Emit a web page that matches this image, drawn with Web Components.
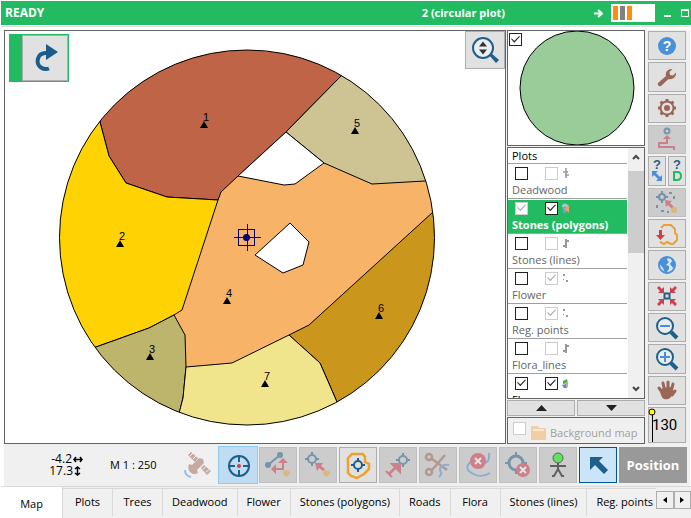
<!DOCTYPE html>
<html lang="en">
<head>
<meta charset="utf-8">
<title>Field map</title>
<style>
html, body { height: 100%; margin: 0; }
body {
  --green: #23bb61; --face: #f0f0f0; --line: #646464;
  background: #fff; color: #000; font: 11px/16px "Open Sans", "Noto Sans", sans-serif; overflow: hidden;
}
</style>
</head>
<body>
<field-app></field-app>
<script>
const define = (name, css, html) => {
  customElements.define(name, class extends HTMLElement {
    constructor() {
      super();
      this.attachShadow({ mode: 'open' });
    }
    connectedCallback() {
      const body = typeof html === 'function' ? html(this) : html;
      this.shadowRoot.innerHTML = `<style>*{box-sizing:border-box}:host{box-sizing:border-box}${css}</style>${body}`;
    }
  });
};

const spokes = (n, draw) => Array.from({ length: n }, (_, i) => `<g transform="rotate(${i * 360 / n} 12 12)">${draw}</g>`).join('');
const cross = (x, y, r) => `<g fill="none" stroke="#1f5f8b" stroke-width="2"><circle cx="${x}" cy="${y}" r="${r}"/><path d="M${x} ${y - r - 3}v4M${x} ${y + r - 1}v4M${x - r - 3} ${y}h4M${x + r - 1} ${y}h4"/></g>`;
const lens = '<circle cx="10" cy="10" r="8" fill="#e9edf0" stroke="#1f5f8b" stroke-width="2"/><path d="M16 16l6 6" stroke="#1f5f8b" stroke-width="4"/>';

const ICONS = {
  redo: [24, '<path d="M16 22.500q-4 1.500-8-1a8 8 0 0 1 4-14.500h3" fill="none" stroke="#1b5c8c" stroke-width="4"/><path d="M13 -2l12 8-12 8z" fill="#1b5c8c"/>'],
  fit: [28, '<circle cx="12" cy="12" r="10" fill="#e9eef2" stroke="#1f5f8b" stroke-width="2"/><path d="M18 19l2-2 8 7-3 3z" fill="#1f5f8b"/><path d="M12 5.500l4 5H8zM12 18.500l4-5H8z" fill="#333"/>'],
  help: [24, '<circle cx="12" cy="12" r="9" fill="#4a90d9"/><text x="12" y="17" text-anchor="middle" font-family="Liberation Sans" font-weight="700" font-size="14" fill="#fff">?</text>'],
  wrench: [24, '<path d="M3 18l8-7c-1-4 2-7.500 6.500-7L14.500 7l.5 3 3 .5 3-3c.5 4-3 7.500-7.500 6.500L6 21c-2 1-4-1-3-3z" fill="#9a6655"/>'],
  gear: [24, spokes(8, '<path d="M10.500 3h3v4h-3z" fill="#9a6655"/>') + '<circle cx="12" cy="12" r="6.500" fill="#e1e1e1" stroke="#9a6655" stroke-width="2"/><circle cx="12" cy="12" r="3" fill="#9a6655"/>'],
  elevate: [24, '<circle cx="12" cy="3" r="2.500" fill="none" stroke="#1f5f8b" stroke-width="2"/><path d="M12 10v5H4v4h15v3" fill="none" stroke="#d0364a" stroke-width="2"/><path d="M12 7l4 4H8z" fill="#d0364a"/>'],
  qmove: [16, '<text x="8" y="6" text-anchor="middle" font-family="Liberation Sans" font-weight="700" font-size="13" fill="#1f5f8b">?</text><path d="M3 8h6L7 10l4 4 2-2v6H7l2-2-4-4-2 2z" fill="#4a90d9"/>'],
  qd: [16, '<text x="8" y="6" text-anchor="middle" font-family="Liberation Sans" font-weight="700" font-size="13" fill="#1f5f8b">?</text><path d="M5 9h3q4 0 4 4t-4 4H5z" fill="none" stroke="#23bb61" stroke-width="2"/>'],
  scatter: [24, cross(7, 7, 3) + '<path d="M10 10l7 1-2 2 4 4-2 2-4-4-2 2z" fill="#d0364a"/><circle cx="19" cy="20" r="3" fill="#eda12f"/><g fill="#1f5f8b"><path d="M14 2h3v2h-3zM18 6h2v3h-2zM1 15h2v3H1zM6 20h3v2H6zM12 21h2v2h-2z"/></g>'],
  outline: [24, '<path d="M6 6l3-3h7l4 4v4l2 2v5l-4 4h-2l-4-2-3 2-4-2" fill="none" stroke="#eda12f" stroke-width="2"/><path d="M4 8h3v5h3l-4.500 5L1 13h3z" fill="#cc3f4d"/>'],
  globe: [24, '<circle cx="12" cy="12" r="8" fill="#d8e6f3" stroke="#4a90d9" stroke-width="2"/><path d="M4 10c2-5 6-7 9-6l-1 3 2 2-3 3 3 1v3l-3 4c-2 0-2-3-3-5zM16 5c3 1 4 4 4 7l-2 3-3-4 2-3z" fill="#4a90d9"/>'],
  center: [24, '<path d="M9.500 9.500h5v5h-5z" fill="none" stroke="#1f5f8b" stroke-width="2"/>' + spokes(4, '<path d="M2 4l2-2 3 3 2-2v6H3l2-2z" fill="#cc3f4d"/>')],
  minus: [24, lens + '<path d="M5 10h10" stroke="#4a90d9" stroke-width="2"/>'],
  plus: [24, lens + '<path d="M5 10h10M10 5v10" stroke="#4a90d9" stroke-width="2"/>'],
  hand: [24, '<path d="M4 10l3 4M8 5l2 9M13 4v9M18 6l-2 8M20 13l-3 4" fill="none" stroke="#9a6655" stroke-width="3" stroke-linecap="round"/><path d="M5 12l3-2 9-1 2 6-4 5q-2 2-6 1-3-1-4-9z" fill="#9a6655"/>'],
  satellite: [28, '<g fill="#9a6655"><path d="M5 4l3-3 7 6-3 4zM18 17l3-3 7 6-4 4z"/><path d="M8 15l8-8 4 1 1 4-7 7zM6 13c5 1 8 5 9 9-3 2-6 1-8-1s-2-5-1-8z"/></g><path d="M2 19q0 6 6 7" fill="none" stroke="#4a90d9" stroke-width="2"/><path d="M7 5l3-3M10 8l3-3M20 18l4-3M23 21l4-3" stroke="#f0f0f0"/>'],
  target: [28, '<circle cx="15" cy="15" r="10" fill="none" stroke="#1f5f8b" stroke-width="2"/><path d="M15 4v7M15 19v7M4 15h7M19 15h7" stroke="#1f5f8b" stroke-width="2"/><circle cx="15" cy="15" r="2" fill="#cc3f4d"/>'],
  segment: [28, '<path d="M4 14L16 4" stroke="#1f5f8b" stroke-width="2"/><g fill="#1f5f8b"><circle cx="4" cy="14" r="3"/><circle cx="16" cy="4" r="3"/></g><path d="M11 18h8v-6" fill="none" stroke="#d0364a" stroke-width="2"/><path d="M12 13v10l-5-5zM14 12h10l-5-5z" fill="#d0364a"/><path d="M20 19l5 1 1 3-4 3-3-3z" fill="#eda12f"/>'],
  pointarrow: [28, cross(8, 8, 4) + '<path d="M11 12h8l-2 3 4 3-2 2-4-3-2 3z" fill="#d0364a"/><path d="M20 19l5 1 1 3-4 3-3-3z" fill="#eda12f"/>'],
  polypoint: [28, '<path d="M8 3h11l2 3v5l4 2v5l-5 5-7 4-6-2-3-3V7z" fill="none" stroke="#eda12f" stroke-width="2.500"/>' + cross(14, 14, 4)],
  vector: [28, cross(19, 9, 4) + '<path d="M5 23l8-8" stroke="#d0364a" stroke-width="2.500"/><path d="M8 13h8v8zM2 20l6 6" fill="#d0364a" stroke="#d0364a" stroke-width="2"/>'],
  scissors: [28, '<g fill="none" stroke="#9a6655" stroke-width="2.500"><circle cx="5" cy="6" r="3"/><circle cx="5" cy="21" r="3"/><path d="M8 8l15 11M8 19L21 4"/></g><path d="M25 14c-7-1-11 3-8 7 1 2-1 4-2 5" fill="none" stroke="#4a90d9" stroke-width="2"/>'],
  delline: [28, '<path d="M25 2c1 12-5 10-11 8C5 8 0 17 6 21s12 6 20 1" fill="none" stroke="#4a90d9" stroke-width="2"/><circle cx="14" cy="10" r="8" fill="#d0364a"/><path d="M11 7l6 6M17 7l-6 6" stroke="#fff" stroke-width="2"/>'],
  delpoint: [28, '<circle cx="12" cy="12" r="7" fill="none" stroke="#1f5f8b" stroke-width="3"/><path d="M12 1v5M1 12h5M12 18v5M18 12h5" stroke="#1f5f8b" stroke-width="2"/><circle cx="19" cy="19" r="7" fill="#d0364a"/><path d="M16 16l6 6M22 16l-6 6" stroke="#fff" stroke-width="2"/>'],
  person: [28, '<path d="M14 11v8M6 15h16M14 18l-4 7H8M14 18l4 7h2" fill="none" stroke="#606060" stroke-width="2"/><circle cx="14" cy="7" r="5" fill="#5fe35a" stroke="#606060"/>'],
  pointer: [28, '<path d="M6 6h13l-4 4 9 9-4 4-9-9-5 5z" fill="#1f5f8b"/>'],
};

define('ui-icon', ':host{display:inline-flex;flex:none}svg{display:block;overflow:visible}', el => {
  const [size, art] = ICONS[el.getAttribute('name')];
  return `<svg width="${size}" height="${size}" viewBox="0 0 ${size} ${size}" aria-hidden="true">${art}</svg>`;
});

define('tool-button', `
  :host{display:flex;min-width:0}
  button{flex:1;min-width:0;margin:0;padding:0;display:flex;align-items:center;justify-content:center;overflow:hidden;
    background:#e1e1e1;border:1px solid #adadad;font:inherit}
  button:disabled{background:#ccc;border-color:#bfbfbf}
  button:disabled ui-icon{opacity:.5}
  :host([kind=hot]) button{background:#bfdcf3;border-color:#90c8f6}
  :host([kind=on]) button{background:#cce4f7;border-color:#00549a}
  :host([kind=flat]) button{background:none;border-color:transparent}
  :host([kind=lit]) ui-icon{opacity:1 !important}`,
  el => `<button type="button" aria-label="${el.getAttribute('label')}" ${el.hasAttribute('off') ? 'disabled' : ''}><ui-icon name="${el.getAttribute('icon')}"></ui-icon></button>`);

define('tick-box', `
  :host{display:inline-flex;flex:none}
  input{appearance:none;width:13px;height:13px;margin:0;border:1px solid #222;background:#fff;display:grid;place-items:center}
  input:checked::before{content:"";width:9px;height:8px;background:#222;clip-path:polygon(0 45%,10% 38%,36% 68%,90% 5%,100% 12%,37% 90%)}
  input:disabled{border-color:#ccc}
  input:disabled::before{background:#aaa}`,
  el => `<input type="checkbox" aria-label="${el.getAttribute('label')}" ${el.hasAttribute('checked') ? 'checked' : ''} ${el.hasAttribute('off') ? 'disabled' : ''}>`);

define('title-bar', `
  :host{display:flex;flex:none;align-items:center;height:24px;margin:1px 0 0 1px;padding-left:4px;background:var(--green);color:#fff;font-weight:700}
  .state{margin-right:auto;font-size:12px}
  .arrow{margin:0 8px 0 89px}
  .meter{width:44px;height:18px;background:#fff;display:flex;gap:2px;padding:2px}
  i{width:5px;background:#ff8c0a}i+i{background:#808080}i+i+i{background:#ff8c0a}
  button{padding:0;border:0;background:none;display:flex}
  .min{margin:0 9px}
  svg{display:block}`, `
  <span class="state">READY</span><span>2 (circular plot)</span>
  <svg class="arrow" width="9" height="9" viewBox="0 0 9 9"><path d="M0 4.500h7M4 1l4 3.500L4 8" fill="none" stroke="#fff" stroke-width="2"/></svg>
  <div class="meter"><i></i><i></i><i></i></div>
  <button class="min" aria-label="Minimise"><svg width="8" height="8"><path d="M0 7h7" stroke="#fff" stroke-width="2"/></svg></button>
  <button aria-label="Maximise"><svg width="10" height="8"><path d="M.5 1v6.500h7V1" fill="none" stroke="#fff"/><path d="M0 1h8" stroke="#fff" stroke-width="2"/></svg></button>`);

const SITES = [[1, 204, 125], [2, 120, 244], [3, 150, 357], [4, 227, 301], [5, 355, 131], [6, 379, 316], [7, 265, 384]];
define('plot-map', `
  :host{display:block;position:relative;border:1px solid var(--line);background:#fff;min-width:0}
  .map{display:block;position:absolute;inset:0;width:100%;height:100%}
  .undo{position:absolute;left:4px;top:3px;width:60px;height:48px;background:var(--green);padding:1px 1px 1px 13px;display:flex}
  .undo tool-button{flex:1}
  .fit{position:absolute;right:0;top:0;width:40px;height:38px}`, `
  <svg class="map" viewBox="5 31 500 412" role="img" aria-label="Circular plot">
    <defs><clipPath id="c"><circle cx="247" cy="237.500" r="187.500"/></clipPath></defs>
    <g clip-path="url(#c)" stroke="#000" stroke-linejoin="round">
      <path d="M40 30h420v420H40z" fill="#f7b469"/>
      <path d="M92 90L100 122 109 156 126 183 167 197 218 200 221 192 238 176 286 132 341 76 380 30H92z" fill="#bf6447"/>
      <path d="M92 90L100 122 109 156 126 183 167 197 218 200 182 310 174 315 149 328 96 347 40 360V90z" fill="#ffd204"/>
      <path d="M40 366L96 347 149 328 174 315 185 335 186 367 183 398 175 430H40z" fill="#bdb56b"/>
      <path d="M286 132L324 163 372 184 425 181 460 179V40H377L341 76z" fill="#cdc393"/>
      <path d="M289 335L309 325 433 212 460 187V440H354L337 402 320 363z" fill="#ca971c"/>
      <path d="M186 367L232 363 289 335 320 363 337 402 354 440H172L183 398z" fill="#f0e48c"/>
      <path d="M238 176L286 132 324 163 295 184 284 185z" fill="#fff"/>
      <path d="M290 223L309 242 303 265 283 273 255 255z" fill="#fff"/>
    </g>
    <circle cx="247" cy="237.500" r="187.500" fill="none" stroke="#000"/>
    <g font-family="Liberation Sans" font-size="11" text-anchor="middle">
      ${SITES.map(([n, x, y]) => `<path d="M${x} ${y - 4}l4 7h-8z"/><text x="${x + 2}" y="${y - 4}">${n}</text>`).join('')}
    </g>
    <g fill="none" stroke="#000080" shape-rendering="crispEdges"><path d="M234 237.500h27M247.500 224v27M238.500 229.500h16v16h-16z"/></g>
    <circle cx="246.500" cy="237.500" r="3.500" fill="#000080"/>
  </svg>
  <div class="undo"><tool-button icon="redo" label="Redo"></tool-button></div>
  <tool-button class="fit" icon="fit" label="Fit zoom"></tool-button>`);

define('plot-overview', `
  :host{display:block;flex:none;position:relative;border:1px solid var(--line);background:#fff;height:116px}
  svg{display:block;width:100%;height:100%}
  tick-box{position:absolute;left:1px;top:2px}`, `
  <svg viewBox="0 0 136 114"><circle cx="69" cy="57" r="57" fill="#99cc99" stroke="#000"/></svg>
  <tick-box label="Show overview" checked></tick-box>`);

const GLYPHS = {
  tree: '<path d="M4 0v10M1 4h5M3 7h4" stroke="#999" stroke-width="1.500"/>',
  line: '<path d="M4 1v9M4 3h3M1 8h3" stroke="#999" stroke-width="2" fill="none"/>',
  dots: '<path d="M1 1h2v2H1zM4 7h2v2H4z" fill="#999"/><path d="M1 6h1v1H1z" fill="#999"/>',
  poly: '<path d="M0 4V2q3-3 6 0v2z" fill="#9cc"/><path d="M0 4h4v6H2z" fill="#6ba3dc"/><path d="M2 6l5-4v8z" fill="#eda15a"/>',
  flora: '<path d="M1 3l4-2v4L1 6z" fill="#23bb61"/><path d="M0 7l4-1 1 4H2z" fill="#4a90d9"/><path d="M3 5l3-3v8z" fill="#eda15a"/>',
};
define('layer-row', `
  :host{display:block;flex:none;height:35px;border-bottom:1px solid #a0a0a0;color:#666;padding:2px 0 0 4px;overflow:hidden}
  :host([bare]){height:16px;padding-top:0;color:#000}
  :host([strong]){color:#000}
  :host([selected]){color:#fff;font-weight:700;background:var(--green);box-shadow:inset 0 1px #fff}
  .boxes{display:flex;align-items:center;gap:17px;padding-left:3px;height:14px}
  .boxes svg{margin-left:-13px}
  .name{line-height:19px;white-space:nowrap}
  :host([bare]) .name{line-height:15px}`,
  el => {
    const box = (k, w) => `<tick-box label="${el.getAttribute('name')} ${w}" ${k[0] === '1' ? 'checked' : ''} ${k[1] === '-' ? 'off' : ''}></tick-box>`;
    const s = el.getAttribute('boxes');
    const top = s ? `<div class="boxes">${box(s.slice(0, 2), 'visible')}${box(s.slice(2), 'shown')}<svg width="8" height="10">${GLYPHS[el.getAttribute('glyph')]}</svg></div>` : '';
    return `${top}<div class="name">${el.getAttribute('name')}</div>`;
  });

define('layer-list', `
  :host{display:flex;border:1px solid var(--line);background:#fff;min-height:0}
  .rows{flex:1;min-width:0;overflow:hidden;display:flex;flex-direction:column;margin-right:1px}
  .bar{width:16px;background:var(--face);display:flex;flex-direction:column}
  button{height:18px;border:0;padding:0;background:none;display:grid;place-items:center}
  .track{flex:1;padding-top:5px}.thumb{height:39%;background:#cdcdcd}`, `
  <div class="rows">
    <layer-row name="Plots" bare></layer-row>
    <layer-row name="Deadwood" boxes="0+0-" glyph="tree"></layer-row>
    <layer-row name="Stones (polygons)" boxes="1-1+" glyph="poly" selected></layer-row>
    <layer-row name="Stones (lines)" boxes="0+0-" glyph="line"></layer-row>
    <layer-row name="Flower" boxes="0+1-" glyph="dots"></layer-row>
    <layer-row name="Reg. points" boxes="0+1-" glyph="dots"></layer-row>
    <layer-row name="Flora_lines" boxes="0+0-" glyph="line"></layer-row>
    <layer-row name="Flora" boxes="1+1+" glyph="flora" strong></layer-row>
  </div>
  <div class="bar">
    <button aria-label="Scroll up"><svg width="8" height="6"><path d="M1 5l3-3 3 3" fill="none" stroke="#444" stroke-width="2"/></svg></button>
    <div class="track"><div class="thumb"></div></div>
    <button aria-label="Scroll down"><svg width="8" height="6"><path d="M1 1l3 3 3-3" fill="none" stroke="#444" stroke-width="2"/></svg></button>
  </div>`);

define('layer-panel', `
  :host{display:flex;flex-direction:column;gap:1px;min-height:0}
  layer-list{flex:1;height:0}
  .move{display:grid;grid-template-columns:1fr 1fr;gap:2px;height:16px;flex:none}
  .move button{padding:0;background:#e1e1e1;border:1px solid #adadad;display:grid;place-items:center}
  label{display:flex;flex:none;align-items:center;height:27px;border:1px solid var(--line);padding:4px 0 0 5px;color:#a0a0a0;white-space:nowrap;overflow:hidden}
  label tick-box{margin-bottom:8px}
  label svg{margin:0 4px 0 5px;flex:none}`, `
  <plot-overview></plot-overview>
  <layer-list></layer-list>
  <div class="move">
    <button aria-label="Move up"><svg width="11" height="6"><path d="M5.500 0L11 6H0z" fill="#222"/></svg></button>
    <button aria-label="Move down"><svg width="11" height="6"><path d="M5.500 6L11 0H0z" fill="#222"/></svg></button>
  </div>
  <label><tick-box label="Background map" off></tick-box><svg width="15" height="14"><path d="M0 0h7l1 2h7v12H0z" fill="#f0cfa4"/><path d="M2 4h11" stroke="#fff"/></svg>Background map</label>`);

define('side-tools', `
  :host{display:flex;flex-direction:column;gap:2px;min-height:0}
  tool-button{flex:1 1 29px;min-height:0}
  .pair{flex:1 1 29px;display:grid;grid-template-columns:1fr 1fr;gap:2px;min-height:0}
  .scale{position:relative;flex:none;height:36px;padding:0 0 0 3px;text-align:left;background:#e1e1e1;border:1px solid #adadad;font:15px/34px Roboto,sans-serif}
  .scale svg{position:absolute;left:-1px;top:0}`, `
  <tool-button icon="help" label="Help"></tool-button>
  <tool-button icon="wrench" label="Tools"></tool-button>
  <tool-button icon="gear" label="Settings"></tool-button>
  <tool-button icon="elevate" label="Elevation" off></tool-button>
  <div class="pair"><tool-button icon="qmove" label="Query move"></tool-button><tool-button icon="qd" label="Query data"></tool-button></div>
  <tool-button icon="scatter" label="Points" off></tool-button>
  <tool-button icon="outline" label="Outline"></tool-button>
  <tool-button icon="globe" label="Globe"></tool-button>
  <tool-button icon="center" label="Centre"></tool-button>
  <tool-button icon="minus" label="Zoom out"></tool-button>
  <tool-button icon="plus" label="Zoom in"></tool-button>
  <tool-button icon="hand" label="Pan"></tool-button>
  <button class="scale"><svg width="8" height="34"><path d="M4.500 6v28" stroke="#000"/><circle cx="4" cy="4" r="3" fill="#ff0" stroke="#000"/></svg>130</button>`);

define('status-tools', `
  :host{display:flex;flex:none;gap:2px;align-items:center;height:42px;margin:0 1px 0 4px;padding-right:3px;background:var(--face);line-height:12px}
  .pos{width:79px;text-align:right;font-size:12px}
  .pos div{display:flex;align-items:center;justify-content:flex-end;gap:1px}
  .pos div+div svg{margin-right:2px}
  .scale{margin:0 auto 0 25px;line-height:16px;font-size:11px;white-space:nowrap}
  tool-button{width:38px;height:36px}
  tool-button[kind=hot]{width:40px;height:38px}
  tool-button[kind=hot]+tool-button{margin-left:-1px}
  .place{width:68px;height:36px;border:0;padding:0;background:#999;color:#fff;font:700 13px/16px "Open Sans","Noto Sans",sans-serif}`, `
  <div class="pos"><div>-4.2<svg width="10" height="7"><path d="M1 3.500h8M3 1L1 3.500 3 6M7 1l2 2.500L7 6" fill="none" stroke="#000" stroke-width="1.500"/></svg></div>
  <div>17.3<svg width="7" height="10"><path d="M3.500 1v8M1 3l2.500-2L6 3M1 7l2.500 2L6 7" fill="none" stroke="#000" stroke-width="1.500"/></svg></div></div>
  <span class="scale">M 1 : 250</span>
  <tool-button kind="flat" icon="satellite" label="GPS" off></tool-button>
  <tool-button kind="hot" icon="target" label="Target"></tool-button>
  <tool-button icon="segment" label="Segment" off></tool-button>
  <tool-button icon="pointarrow" label="Move point" off></tool-button>
  <tool-button icon="polypoint" label="Reference point"></tool-button>
  <tool-button icon="vector" label="Vector" off></tool-button>
  <tool-button icon="scissors" label="Cut" off></tool-button>
  <tool-button icon="delline" label="Delete line" off></tool-button>
  <tool-button icon="delpoint" label="Delete point" off></tool-button>
  <tool-button kind="lit" icon="person" label="Person" off></tool-button>
  <tool-button kind="on" icon="pointer" label="Select"></tool-button>
  <button class="place">Position</button>`);

define('page-tabs', `
  :host{display:flex;flex:none;height:32px;border-top:1px solid #d9d9d9;background:var(--face);overflow:hidden;margin-left:1px}
  nav{display:flex;flex:1;min-width:0;overflow:hidden;padding-top:1px}
  nav button{flex:none;min-width:50px;height:28px;border:0;border-top:1px solid #d9d9d9;border-right:1px solid #d9d9d9;background:none;padding:0 9px 2px;font:inherit;white-space:nowrap}
  nav .on{width:62px;height:31px;margin-top:-1px;background:#fff;border-top:0;padding:2px 0 0;border-color:#d9d9d9}
  .more{display:flex;margin-top:4px;height:18px;width:35px;flex:none}
  .more button{flex:1;padding:0;border:1px solid #adadad;background:#f0f0f0;display:grid;place-items:center}`, `
  <nav role="tablist"><button role="tab" class="on" aria-selected="true">Map</button>${['Plots', 'Trees', 'Deadwood', 'Flower', 'Stones (polygons)', 'Roads', 'Flora', 'Stones (lines)', 'Reg. points'].map(t => `<button role="tab">${t}</button>`).join('')}</nav>
  <div class="more"><button aria-label="Previous tabs"><svg width="4" height="6"><path d="M4 0v6L0 3z"/></svg></button><button aria-label="Next tabs"><svg width="4" height="6"><path d="M0 0v6l4-3z"/></svg></button></div>`);

define('field-app', `
  :host{display:flex;flex-direction:column;height:100vh;background:#fff}
  main{flex:1;min-height:0;display:grid;grid-template:minmax(0,1fr) / minmax(0,1fr) 138px 40px;column-gap:1px;margin:1px 1px 0;padding:3px 4px 0 3px;border-top:1px solid #e0e0e0;background:linear-gradient(var(--face),var(--face)) no-repeat 3px 3px}
  plot-map{min-height:0}
  side-tools{padding:1px 0 1px 2px}`, `
  <title-bar></title-bar>
  <main><plot-map></plot-map><layer-panel></layer-panel><side-tools></side-tools></main>
  <status-tools></status-tools>
  <page-tabs></page-tabs>`);
</script>
</body>
</html>
